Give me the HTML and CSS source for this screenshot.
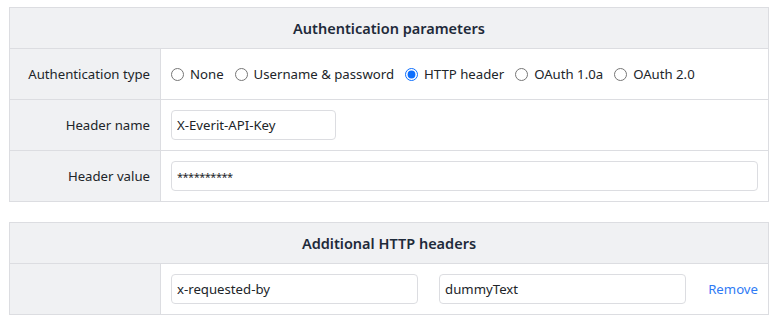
FILE: index.html
```html
<!DOCTYPE html>
<html>
<head>
<meta charset="utf-8">
<link rel="stylesheet" href="styles.css">
</head>
<body>
<div class="page">
  <table class="params">
    <colgroup><col class="label-col"><col></colgroup>
    <tr><th colspan="2" class="head">Authentication parameters</th></tr>
    <tr>
      <td class="label">Authentication type</td>
      <td class="value">
        <div class="radios">
          <label class="radio"><input type="radio" name="auth"><span>None</span></label>
          <label class="radio"><input type="radio" name="auth"><span>Username &amp; password</span></label>
          <label class="radio"><input type="radio" name="auth" checked><span>HTTP header</span></label>
          <label class="radio"><input type="radio" name="auth"><span>OAuth 1.0a</span></label>
          <label class="radio"><input type="radio" name="auth"><span>OAuth 2.0</span></label>
        </div>
      </td>
    </tr>
    <tr>
      <td class="label">Header name</td>
      <td class="value"><input class="field short" type="text" value="X-Everit-API-Key"></td>
    </tr>
    <tr>
      <td class="label">Header value</td>
      <td class="value"><input class="field full secret" type="text" value="**********"></td>
    </tr>
  </table>

  <table class="params second">
    <colgroup><col class="label-col"><col></colgroup>
    <tr><th colspan="2" class="head">Additional HTTP headers</th></tr>
    <tr>
      <td class="label"></td>
      <td class="value">
        <div class="pair">
          <input class="field grow" type="text" value="x-requested-by">
          <input class="field grow" type="text" value="dummyText">
          <a class="remove" href="#">Remove</a>
        </div>
      </td>
    </tr>
  </table>
</div>
</body>
</html>
```
FILE: styles.css
```css
* { box-sizing: border-box; }
body {
  margin: 0;
  background: #ffffff;
  font-family: "Noto Sans", "Open Sans", sans-serif;
  font-size: 13.2px;
  color: #212529;
}
.page {
  padding: 7px 16px 0 9px;
}
.params {
  width: 760px;
  border-collapse: collapse;
  border: 1px solid #dcdde1;
  table-layout: fixed;
}
.label-col { width: 151px; }
.second { margin-top: 20px; }
.head {
  height: 41px;
  background: #f0f1f3;
  border-bottom: 1px solid #dcdde1;
  font-weight: 600;
  font-size: 14.5px;
  color: #1e2a3a;
  text-align: center;
  padding: 0;
}
.params td {
  border-top: 1px solid #dcdde1;
  height: 51px;
  padding: 10px;
}
.label {
  background: #f0f1f3;
  text-align: right;
  border-right: 1px solid #dcdde1;
  white-space: nowrap;
}
.value { background: #fff; }
.radios {
  display: flex;
  align-items: center;
  gap: 11px;
}
.radio {
  display: flex;
  align-items: center;
  gap: 6px;
}
.radio input {
  margin: 0;
  width: 13px;
  height: 13px;
  accent-color: #0d6efd;
}
.field {
  height: 30px;
  border: 1px solid #dcdde1;
  border-radius: 4px;
  padding: 0 5px;
  font: inherit;
  color: #212529;
  background: #fff;
  outline: none;
}
.secret { font-size: 11px; letter-spacing: -0.5px; }
.short { width: 165px; }
.full { width: 100%; }
.pair {
  display: flex;
  align-items: center;
  gap: 21px;
}
.grow { width: 248px; }
.remove {
  color: #2f7bf5;
  text-decoration: none;
  margin-left: 1px;
}
```
